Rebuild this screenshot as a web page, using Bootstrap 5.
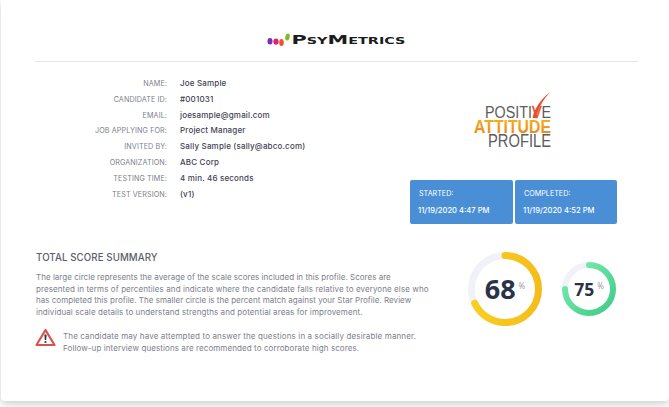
<!DOCTYPE html>
<html lang="en"><head><meta charset="utf-8"><title>PsyMetrics</title>
<link href="https://cdn.jsdelivr.net/npm/bootstrap@5.3.0/dist/css/bootstrap.min.css" rel="stylesheet">
<style>
html,body{height:407px;overflow:hidden;background:#fff}
body{font-family:Inter,"Noto Sans",sans-serif;color:#3f4254}
.sheet{height:401px;background:#fff;margin-left:1px;border-radius:0 0 4px 4px;box-shadow:0 3px 8px rgba(0,0,0,.2);padding:0 31px 0 34px}
.brandbar{height:62px;border-bottom:1px solid #e6e6e6;padding-top:27px}
.brandlogo{display:block;margin-left:1px}
.brandname{font-family:"DejaVu Sans",sans-serif;font-weight:700;font-size:13px;fill:#1c1c20;font-variant:small-caps}
.toparea{height:178px}
.facts{padding-top:14px;width:375px}
.fact{height:15.8px;line-height:15.8px}
.factkey{width:132px;text-align:right;color:#7a7f8c;margin-right:13px;font-size:7.2px;letter-spacing:.1px}
.factval{font-weight:500;color:#3f4254;font-size:8px;letter-spacing:.17px}
.sidepane{width:208px}
.pap{width:100px;height:62px;display:block;margin:27px 0 0 58px}
.stamps{gap:2px;margin-top:29px}
.stamp{width:102px;height:44px;background:#4a8fd6;border-radius:2px;color:#fff;padding:5px 9px;font-size:7.2px;line-height:17px}
.stamp:first-child{width:103px}
.stamp b{font-weight:500;display:block;font-size:7.6px;margin-left:-1px}
.sumtext{width:400px;padding:11px 0 0 1px}
.sumtitle{font-size:9.7px;font-weight:500;color:#5b5e6b;line-height:14px;margin:0 0 7px;letter-spacing:.1px}
.sumbody{font-size:8px;letter-spacing:.09px;line-height:11.6px;color:#7d808c;margin:0;white-space:nowrap}
.snug{letter-spacing:.02px}
.airy{letter-spacing:.13px}
.warnrow{margin-top:13px}
.warnicon{width:21px;height:19px;flex:none;margin:-3px 7px 0 -1px}
.dials{margin-left:32px;padding-top:11px;gap:18px}
.dial{position:relative}
.dialnum{position:absolute;inset:0;display:flex;align-items:center;justify-content:center;font-family:"Noto Sans",sans-serif;font-weight:700;color:#2a3249}
.big{font-size:27px}.small-num{font-size:17.5px}
.pct{font-size:8px;font-weight:400;color:#9a9eaa;margin:-7px 0 0 3px}
</style></head><body>
<div class="sheet">
 <div class="brandbar d-flex justify-content-center align-items-start">
  <svg class="brandlogo" width="140" height="22" viewBox="0 0 140 22" role="img" aria-label="PsyMetrics">
   <ellipse cx="3" cy="14.2" rx="2.5" ry="3.2" fill="#7b2fb5"/><ellipse cx="9" cy="14.6" rx="2.6" ry="3.2" fill="#e01f7a"/><ellipse cx="14.5" cy="15.6" rx="2.3" ry="3.5" fill="#f0512a"/><ellipse cx="20.5" cy="10" rx="2.2" ry="3.6" fill="#7dbb2b" transform="rotate(12 20.5 10)"/>
   <text class="brandname" x="24.5" y="17" textLength="114" lengthAdjust="spacingAndGlyphs">PsyMetrics</text>
  </svg>
 </div>
 <div class="toparea d-flex">
  <div class="facts">
   <div class="fact d-flex"><div class="factkey">NAME:</div><div class="factval">Joe Sample</div></div>
   <div class="fact d-flex"><div class="factkey">CANDIDATE ID:</div><div class="factval">#001031</div></div>
   <div class="fact d-flex"><div class="factkey">EMAIL:</div><div class="factval">joesample@gmail.com</div></div>
   <div class="fact d-flex"><div class="factkey">JOB APPLYING FOR:</div><div class="factval">Project Manager</div></div>
   <div class="fact d-flex"><div class="factkey">INVITED BY:</div><div class="factval">Sally Sample (sally@abco.com)</div></div>
   <div class="fact d-flex"><div class="factkey">ORGANIZATION:</div><div class="factval">ABC Corp</div></div>
   <div class="fact d-flex"><div class="factkey">TESTING TIME:</div><div class="factval">4 min. 46 seconds</div></div>
   <div class="fact d-flex"><div class="factkey">TEST VERSION:</div><div class="factval">(v1)</div></div>
  </div>
  <div class="sidepane">
   <svg class="pap" viewBox="0 0 100 62" role="img" aria-label="Positive Attitude Profile">
    <defs><linearGradient id="au" x1="0" y1="0" x2="0" y2="1"><stop offset="0" stop-color="#f7bb1a"/><stop offset="1" stop-color="#ea7f1c"/></linearGradient></defs>
    <g font-family="Liberation Sans, sans-serif">
     <text x="17" y="29" font-size="16.8" fill="#5c5c5c" textLength="66" lengthAdjust="spacingAndGlyphs">POSITI<tspan fill="#e8502a" stroke="#e8502a" stroke-width=".5">V</tspan>E</text>
     <text x="6" y="43.5" font-size="19" font-weight="700" fill="url(#au)" textLength="77" lengthAdjust="spacingAndGlyphs">ATTITUDE</text>
     <text x="20" y="58" font-size="17.5" fill="#5c5c5c" textLength="63" lengthAdjust="spacingAndGlyphs">PROFILE</text>
    </g>
    <path d="M64.5 29L68 29C70 20 75 10 82.5 3C74 9 68.5 17 65.5 25Z" fill="#e8502a"/>
   </svg>
   <div class="stamps d-flex">
    <div class="stamp">STARTED:<b>11/19/2020 4:47 PM</b></div>
    <div class="stamp">COMPLETED:<b>11/19/2020 4:52 PM</b></div>
   </div>
  </div>
 </div>
 <div class="d-flex">
  <div class="sumtext">
   <h2 class="sumtitle">TOTAL SCORE SUMMARY</h2>
   <p class="sumbody"><span class="snug">The large circle represents the average of the scale scores included in this profile. Scores are</span><br>presented in terms of percentiles and indicate where the candidate falls relative to everyone else who<br><span class="snug">has completed this profile. The smaller circle is the percent match against your Star Profile. Review</span><br>individual scale details to understand strengths and potential areas for improvement.</p>
   <div class="warnrow d-flex">
    <svg class="warnicon" viewBox="0 0 21 19" aria-hidden="true"><path d="M10.5 2L19.5 17H1.5Z" fill="none" stroke="#d9534f" stroke-width="2.2" stroke-linejoin="round"/><path d="M9.4 6.5h2.2l-.4 5.5h-1.4Z" fill="#333"/><circle cx="10.5" cy="14" r="1.1" fill="#333"/></svg>
    <p class="sumbody"><span class="airy">The candidate may have attempted to answer the questions in a socially desirable manner.</span><br>Follow-up interview questions are recommended to corroborate high scores.</p>
   </div>
  </div>
  <div class="dials d-flex align-items-start">
   <div class="dial"><svg width="76" height="76" viewBox="0 0 76 76" aria-hidden="true"><defs><linearGradient id="ye" x1="0" y1="0" x2="0" y2="1"><stop offset="0" stop-color="#f9cf20"/><stop offset="1" stop-color="#f5bd1a"/></linearGradient></defs><circle cx="38" cy="38" r="33.5" fill="none" stroke="#f1f2f7" stroke-width="7"/><circle cx="38" cy="38" r="33.5" fill="none" stroke="url(#ye)" stroke-width="7" stroke-linecap="round" pathLength="100" stroke-dasharray="68 100" transform="rotate(-90 38 38)"/></svg><div class="dialnum big">68<span class="pct">%</span></div></div>
   <div class="dial" style="margin-top:10px"><svg width="56" height="56" viewBox="0 0 56 56" aria-hidden="true"><defs><linearGradient id="gr" x1="0" y1="1" x2="1" y2="0"><stop offset="0" stop-color="#3ecb84"/><stop offset="1" stop-color="#7eeeb5"/></linearGradient></defs><circle cx="28" cy="28" r="24" fill="none" stroke="#f1f2f7" stroke-width="6"/><circle cx="28" cy="28" r="24" fill="none" stroke="url(#gr)" stroke-width="6" stroke-linecap="round" pathLength="100" stroke-dasharray="75 100" transform="rotate(-90 28 28)"/></svg><div class="dialnum small-num">75<span class="pct">%</span></div></div>
  </div>
 </div>
</div>
<script src="https://cdn.jsdelivr.net/npm/bootstrap@5.3.0/dist/js/bootstrap.bundle.min.js"></script>
</body></html>
